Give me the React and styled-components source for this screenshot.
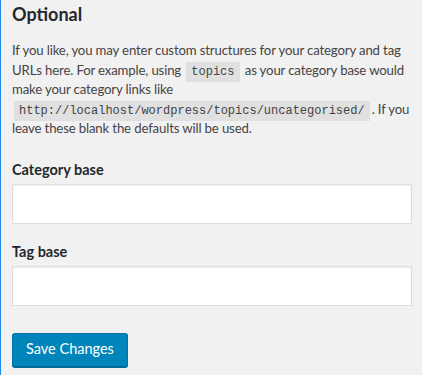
import styled, { createGlobalStyle } from 'styled-components'

const GlobalStyle = createGlobalStyle`
  html, body {
    margin: 0;
    padding: 0;
    background: #f1f1f1;
  }
  body {
    font-family: Lato, 'Noto Sans', sans-serif;
    font-size: 13px;
    color: #444;
  }
`

const Wrap = styled.div`
  border-left: 1px solid #1e8ae6;
  min-height: 375px;
  box-sizing: border-box;
  padding: 3px 10px 0 11px;
`

const Title = styled.h2`
  font-size: 18px;
  line-height: 22px;
  font-weight: 700;
  color: #23282d;
  margin: 0 0 16px 0;
`

const Text = styled.p`
  margin: 0 0 22px 0;
  line-height: 19.5px;
  font-size: 13.2px;
  letter-spacing: -0.15px;
`

const Code = styled.code`
  font-family: 'Liberation Mono', monospace;
  font-size: 12px;
  line-height: 1;
  letter-spacing: 0;
  background: rgba(0, 0, 0, 0.07);
  padding: 3px 5px 3px;
  margin: 0 2px;
`

const Field = styled.div`
  display: flex;
  flex-direction: column;
  gap: 5px;
  margin-bottom: 19px;
`

const Label = styled.label`
  font-size: 14.5px;
  line-height: 18px;
  font-weight: 700;
  color: #23282d;
`

const Input = styled.input`
  box-sizing: border-box;
  width: 400px;
  height: 40px;
  margin: 0;
  padding: 3px 8px;
  background: #fff;
  border: 1px solid #ddd;
  box-shadow: inset 0 1px 2px rgba(0, 0, 0, 0.07);
  font: inherit;
  outline: none;
`

const Button = styled.button`
  margin-top: 8px;
  height: 34px;
  padding: 0 13px 2px;
  background: #0085ba;
  border: 1px solid #0073aa;
  border-bottom-color: #006799;
  border-radius: 3px;
  box-shadow: 0 1px 0 #006799;
  color: #fff;
  font-family: Lato, 'Noto Sans', sans-serif;
  font-size: 14.5px;
  cursor: pointer;
`

export default function App() {
  return (
    <Wrap>
      <GlobalStyle />
      <Title>Optional</Title>
      <Text>
        If you like, you may enter custom structures for your category and tag URLs here. For
        example, using <Code>topics</Code> as your category base would make your category links
        like <Code>http://localhost/wordpress/topics/uncategorised/</Code>. If you leave these blank
        the defaults will be used.
      </Text>
      <Field>
        <Label htmlFor="category_base">Category base</Label>
        <Input id="category_base" type="text" />
      </Field>
      <Field>
        <Label htmlFor="tag_base">Tag base</Label>
        <Input id="tag_base" type="text" />
      </Field>
      <Button>Save Changes</Button>
    </Wrap>
  )
}
